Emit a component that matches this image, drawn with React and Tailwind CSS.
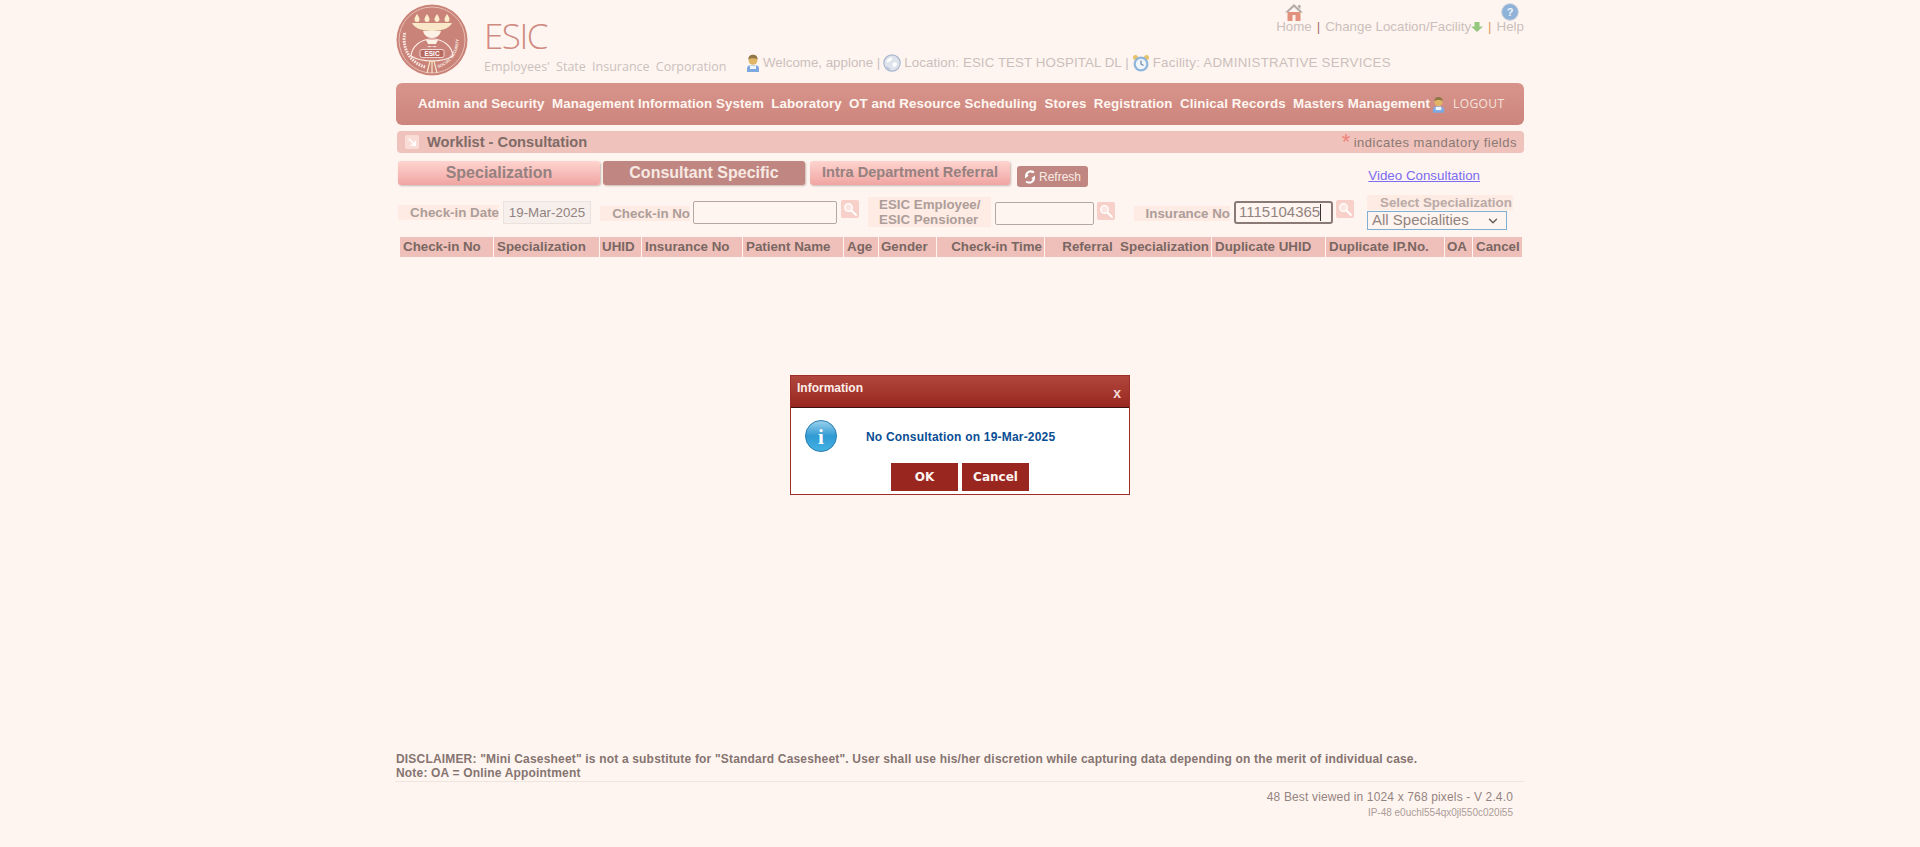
import { ChevronDown } from 'lucide-react'

const navItems = ['Admin and Security', 'Management Information System', 'Laboratory', 'OT and Resource Scheduling', 'Stores', 'Registration', 'Clinical Records', 'Masters Management']

const columns = [
    { label: 'Check-in No', cls: 'w-[93px] pl-[3px]' },
    { label: 'Specialization', cls: 'w-[105px] pl-[3px]' },
    { label: 'UHID', cls: 'w-[41px] pl-[2px]' },
    { label: 'Insurance No', cls: 'w-[100px] pl-[3px]' },
    { label: 'Patient Name', cls: 'w-[100px] pl-[3px]' },
    { label: 'Age', cls: 'w-[34px] pl-[3px]' },
    { label: 'Gender', cls: 'w-[57px] pl-[2px]' },
    { label: 'Check-in Time', cls: 'w-[107px] text-right pr-[2px]' },
    { label: 'Referral\u00a0 Specialization', cls: 'w-[166px] text-right pr-[2px]' },
    { label: 'Duplicate UHID', cls: 'w-[113px] pl-[3px]' },
    { label: 'Duplicate IP.No.', cls: 'w-[118px] pl-[3px]' },
    { label: 'OA', cls: 'w-[27px] pl-[2px]' },
    { label: 'Cancel', cls: 'w-[49px] pl-[3px]' },
]

function Person({ className }) {
    return (
        <svg viewBox="0 0 14 18" className={className}>
            <path d="M1 18v-4c0-2 2-3 6-3s6 1 6 3v4z" fill="#7ea9e0" />
            <path d="M4 11.5h6v3.5h-6z" fill="#eef4fb" />
            <ellipse cx="7" cy="6" rx="4.5" ry="4.8" fill="#e0b565" />
            <path d="M2.4 5.5C2.4 2 4.5.8 7 .8s4.6 1.2 4.6 4.7C9.5 3.8 4.5 3.8 2.4 5.5z" fill="#8f7748" />
        </svg>
    )
}

function Globe() {
    return (
        <svg viewBox="0 0 18 18" className="w-[18px] h-[18px]">
            <circle cx="9" cy="9" r="8.2" fill="#dfe3ec" stroke="#aab7cf" strokeWidth="1.2" />
            <path d="M4 6c2-2 4-3 5-2s-1 3-3 4-3 0-2-2zM10 9c2-1 4 0 4 1s-2 3-3 3-2-3-1-4z" fill="#fff" />
            <path d="M3 12c2 1 3 3 5 3-2 1-4 0-5-3z" fill="#a9b8d2" />
        </svg>
    )
}

function Clock() {
    return (
        <svg viewBox="0 0 18 18" className="w-[18px] h-[18px]">
            <circle cx="3.5" cy="3.5" r="2.5" fill="#e6c36a" />
            <circle cx="14.5" cy="3.5" r="2.5" fill="#e6c36a" />
            <circle cx="9" cy="10" r="7.5" fill="#8fb6dc" />
            <circle cx="9" cy="10" r="5.2" fill="#f1f6fb" />
            <path d="M9 6.5v3.5l2.5 1.5" fill="none" stroke="#6d87a6" strokeWidth="1.2" />
        </svg>
    )
}

function Home() {
    return (
        <svg viewBox="0 0 20 18" className="w-[20px] h-[18px]">
            <path d="M3.5 9h13v9h-13z" fill="#e2917f" />
            <path d="M8.5 12h3v6h-3z" fill="#fff1ea" />
            <path d="M10 1 1 9.5h3L10 4l6 5.500h3z" fill="#b5aca8" />
            <path d="M14 2h2.500v4L14 4z" fill="#b5aca8" />
        </svg>
    )
}

function Help() {
    return (
        <svg viewBox="0 0 18 18" className="w-[18px] h-[18px]">
            <circle cx="9" cy="9" r="8.300" fill="#8fb2d8" stroke="#c5cfdb" strokeWidth="1" />
            <text x="9" y="13" textAnchor="middle" fontSize="11" fontWeight="700" fill="#eef5fb" fontFamily="Liberation Sans, sans-serif">?</text>
        </svg>
    )
}

function DownArrow() {
    return (
        <svg viewBox="0 0 12 12" className="w-[12px] h-[12px] shrink-0 mb-[1px]">
            <path d="M3.500 1h5v4.500H12L6 11 0 5.500h3.500z" fill="#96c77e" />
        </svg>
    )
}

function SearchBtn({ className }) {
    return (
        <div className={`w-[18px] h-[18px] rounded-[2px] bg-[#f7d0c9] shrink-0 ${className}`}>
            <svg viewBox="0 0 18 18" className="w-[18px] h-[18px]">
                <circle cx="7.500" cy="7.500" r="3.800" fill="#fbe6e1" stroke="#fff" strokeWidth="1.300" />
                <path d="M10.500 10.500 15 15" stroke="#fff" strokeWidth="2" strokeLinecap="round" />
            </svg>
        </div>
    )
}

function Logo() {
    return (
        <svg viewBox="0 0 72 72" className="w-[72px] h-[72px] shrink-0">
            <circle cx="36" cy="36" r="35.500" fill="#c98379" />
            <circle cx="36" cy="36" r="33" fill="none" stroke="#f3d9cf" strokeWidth="0.700" />
            <path id="rightArc" d="M42 64A29 29 0 0 0 62 30" fill="none" />
            <text fontSize="4.200" fontWeight="700" fill="#fbeae3" fontFamily="Liberation Sans, sans-serif">
                <textPath href="#rightArc">SOCIAL SECURITY</textPath>
            </text>
            <path d="M29 63A29 29 0 0 1 9 28" fill="none" stroke="#fbeae3" strokeWidth="3" strokeDasharray="1.600 1" />
            {/* lamp: four flames over a shallow dish and bowl */}
            {[21, 31, 41, 51].map(x => (
                <path key={x} d={`M${x} 10c1.800 2.500 2.500 4 2.500 5.500a2.500 2.500 0 0 1-5 0c0-1.500.7-3 2.500-5.500z`} fill="#fbeccb" />
            ))}
            <path d="M16 19h40c-2 5-10 8-20 8s-18-3-20-8z" fill="#f8e8c8" />
            <path d="M27 27h18c-1 4-4 7-9 7s-8-3-9-7z" fill="#fdf2e6" />
            <path d="M15 52c1-10 10-17 21-17s20 7 21 17" fill="none" stroke="#fbeae3" strokeWidth="1.200" />
            <path d="M30 36h12l-2 4h-8z" fill="#fdf2e6" />
            <text x="36" y="44" textAnchor="middle" fontSize="3.600" fill="#fff" fontWeight="700" fontFamily="Liberation Sans, sans-serif">••• •••</text>
            <rect x="24" y="45.500" width="24" height="8" rx="2" fill="#b9685f" stroke="#fff" strokeWidth="0.700" />
            <text x="36" y="52" textAnchor="middle" fontSize="6.500" fill="#fff" fontWeight="700" fontFamily="Liberation Sans, sans-serif">ESIC</text>
            <path d="M15 52c5 3 13 5 21 5s16-2 21-5" fill="none" stroke="#fbeae3" strokeWidth="1.200" />
            <path d="M31 69l3-12h4l3 12M36 57v12" fill="none" stroke="#f8e8c8" strokeWidth="1.200" />
        </svg>
    )
}

function Tab({ label, active, className }) {
    return (
        <div className={`h-[24px] rounded-[3px] text-center font-bold shadow-[1px_1px_2px_rgba(120,90,85,0.4)] ${active ? 'bg-[#c08681] text-[#f8e9e3]' : 'bg-gradient-to-b from-[#fed4cf] to-[#f0a5a2] text-[#958180]'} ${className}`}>
            {label}
        </div>
    )
}

function Dialog() {
    return (
        <div className="absolute left-[790px] top-[375px] w-[340px] h-[120px] border border-[#a02e28] bg-white">
            <div className="relative h-[32px] border-b border-[#3d120e] bg-gradient-to-b from-[#b0463d] to-[#98261e]">
                <span className="absolute left-[6px] top-[5px] text-[12px] font-bold leading-[14px] text-[#fdeeea]">Information</span>
                <span className="absolute right-[8px] top-[9px] text-[14px] font-bold leading-[16px] text-[#f4d9d4]">x</span>
            </div>
            <div className="flex items-center h-[55px] pt-[2px] pl-[13px]">
                <svg viewBox="0 0 34 34" className="w-[34px] h-[34px] shrink-0 -mt-[1px]">
                    <defs>
                        <linearGradient id="infoFill" x1="0" y1="0" x2="0" y2="1">
                            <stop offset="0" stopColor="#9fd2ee" />
                            <stop offset="0.5" stopColor="#2f9ad3" />
                            <stop offset="1" stopColor="#45b2e4" />
                        </linearGradient>
                    </defs>
                    <circle cx="17" cy="17" r="15.500" fill="url(#infoFill)" stroke="#2c7fae" strokeWidth="1" />
                    <text x="17" y="25" textAnchor="middle" fontSize="21" fontWeight="700" fill="#fff" fontFamily="Liberation Serif, serif">i</text>
                </svg>
                <span className="ml-[28px] mt-[1px] text-[12px] font-bold tracking-[0.2px] text-[#0a4e94]">No Consultation on 19-Mar-2025</span>
            </div>
            <div className="flex justify-center gap-[4px] font-['DejaVu_Sans',sans-serif] text-[12px] font-bold text-[#fdf3ef]">
                <button className="w-[67px] h-[28px] bg-[#9a2620]">OK</button>
                <button className="w-[67px] h-[28px] bg-[#9a2620]">Cancel</button>
            </div>
        </div>
    )
}

export default function App() {
    return (
        <div className="relative h-[847px] bg-[#fff5f0] font-['Liberation_Sans',Arial,sans-serif] overflow-hidden">
            <div className="w-[1130px] h-full mx-auto flex flex-col">
                {/* header */}
                <div className="flex h-[83px] pt-[4px] pl-[1px]">
                    <Logo />
                    <div className="ml-[16px] pt-[12px] w-[261px] shrink-0">
                        <div className="font-['Open_Sans',sans-serif] font-light text-[35px] leading-[40px] tracking-[-1.5px] text-[#cf8a82]">ESIC</div>
                        <div className="mt-[2px] font-['Open_Sans',sans-serif] text-[12.5px] leading-[18px] text-[#c9c1be] whitespace-nowrap [word-spacing:3px]">Employees' State Insurance Corporation</div>
                    </div>
                    <div className="flex-1 flex flex-col text-[13.33px] text-[#cbbfbc]">
                        <div className="flex justify-end items-end h-[33px] -mt-[3px] pr-[1px] whitespace-nowrap">
                            <div className="flex flex-col items-center -mb-[1px]">
                                <div className="-mb-[2px]"><Home /></div>
                                <span className="leading-[16px]">Home</span>
                            </div>
                            <span className="mx-[5px] leading-[15px] text-[#a8716a]">|</span>
                            <span className="leading-[15px]">Change Location/Facility</span>
                            <DownArrow />
                            <span className="mx-[5px] leading-[15px] text-[#d9a05e]">|</span>
                            <div className="flex flex-col items-center -mb-[1px]">
                                <div className="-mb-[2px]"><Help /></div>
                                <span className="leading-[16px]">Help</span>
                            </div>
                        </div>
                        <div className="flex items-center gap-[3px] mt-[19px] pl-[1px] whitespace-nowrap">
                            <Person className="w-[14px] h-[18px]" />
                            <span>Welcome, applone |</span>
                            <Globe />
                            <span className="tracking-[0.08px]">Location: ESIC TEST HOSPITAL DL |</span>
                            <Clock />
                            <span className="tracking-[0.25px]">Facility: ADMINISTRATIVE SERVICES</span>
                        </div>
                    </div>
                </div>

                {/* nav */}
                <div className="flex items-center h-[42px] mx-[1px] pl-[22px] rounded-[6px] bg-gradient-to-b from-[#d8948b] to-[#cc857d] text-[13.33px] font-bold tracking-[0.08px] text-[#fff6f0] whitespace-nowrap">
                    <div className="flex gap-[7.4px]">
                        {navItems.map(item => <span key={item}>{item}</span>)}
                    </div>
                    <Person className="w-[13px] h-[17px] ml-[2px]" />
                    <span className="ml-[8px] font-['Open_Sans',sans-serif] font-normal text-[12px] tracking-[0.4px] text-[#f6e4dd]">LOGOUT</span>
                </div>

                {/* title bar */}
                <div className="flex items-center justify-between h-[22px] mt-[6px] ml-[2px] mr-[1px] pl-[8px] pr-[7px] rounded-[4px] bg-[#efc2bb]">
                    <div className="flex items-center gap-[8px]">
                        <div className="w-[14px] h-[14px] rounded-[2px] bg-[#f9dcd6] flex items-center justify-center">
                            <svg viewBox="0 0 10 10" className="w-[9px] h-[9px]">
                                <path d="M1 1l6 6M8 3v5H3" fill="none" stroke="#fff" strokeWidth="1.800" />
                            </svg>
                        </div>
                        <span className="text-[14.67px] font-bold text-[#7f6b67]">Worklist - Consultation</span>
                    </div>
                    <div className="flex items-start text-[#8b7975] text-[13px] tracking-[0.5px]">
                        <span className="text-[#f2837a] text-[22px] leading-[20px] mr-[3px] h-[18px]">*</span>
                        <span className="leading-[21px]">indicates mandatory fields</span>
                    </div>
                </div>

                {/* tabs */}
                <div className="relative flex h-[34px] mt-[8px] pl-[3px]">
                    <Tab label="Specialization" className="w-[202px] text-[16px] leading-[24px]" />
                    <Tab label="Consultant Specific" active className="w-[202px] ml-[3px] text-[16px] leading-[24px]" />
                    <Tab label="Intra Department Referral" className="w-[200px] ml-[5px] text-[14.6px] leading-[22px]" />
                    <div className="flex items-center justify-center gap-[3px] w-[71px] h-[21px] ml-[7px] mt-[5px] rounded-[3px] bg-[#c08681] text-[12px] text-[#f9ebe5]">
                        <svg viewBox="0 0 12 16" className="w-[12px] h-[16px]">
                            <path d="M10 3.500C6 1 2 3 2 7.500l2-1.500M2 12.500c4 2.500 8 .5 8-4l-2 1.500" fill="none" stroke="#fff" strokeWidth="2" />
                        </svg>
                        Refresh
                    </div>
                    <a className="ml-auto mr-[45px] mt-[6px] text-[13.33px] leading-[17px] text-[#7b6cf0] underline">Video Consultation</a>
                </div>

                {/* filters */}
                <div className="flex items-start h-[41px] pl-[3px] text-[#ad9d99] text-[13.33px] font-bold">
                    <label className="w-[101px] h-[15px] mt-[10px] text-right leading-[16px] bg-[#fdebe4] whitespace-nowrap">Check-in Date</label>
                    <div className="w-[88px] h-[23px] ml-[4px] mt-[6px] bg-[#f6efeb] border border-[#ece2dd] text-[13.33px] font-normal text-[#928380] leading-[21px] text-center">19-Mar-2025</div>
                    <label className="w-[90px] h-[15px] ml-[9px] mt-[11px] text-right leading-[16px] bg-[#fdebe4] whitespace-nowrap">Check-in No</label>
                    <div className="w-[144px] h-[23px] ml-[3px] mt-[6px] border border-[#b7a7a3] rounded-[2px]" />
                    <SearchBtn className="ml-[4px] mt-[5px]" />
                    <label className="w-[123px] h-[30px] ml-[9px] mt-[2px] pl-[11px] leading-[15px] bg-[#fdebe4]">ESIC Employee/<br />ESIC Pensioner</label>
                    <div className="w-[99px] h-[23px] ml-[4px] mt-[7px] border border-[#b7a7a3] rounded-[2px]" />
                    <SearchBtn className="ml-[3px] mt-[7px]" />
                    <label className="w-[96px] h-[15px] ml-[19px] mt-[11px] text-right leading-[16px] bg-[#fdebe4] whitespace-nowrap">Insurance No</label>
                    <div className="flex items-center w-[99px] h-[23px] ml-[4px] mt-[6px] pl-[3px] border-2 border-[#8a7a76] rounded-[3px] text-[15px] font-normal text-[#928380]">
                        1115104365<span className="w-px h-[17px] bg-[#3b3330]" />
                    </div>
                    <SearchBtn className="ml-[3px] mt-[5px]" />
                    <div className="w-[146px] ml-[13px]">
                        <div className="h-[15px] pl-[13px] bg-[#fdebe4] text-[#b9aaa6] leading-[16px] whitespace-nowrap">Select Specialization</div>
                        <div className="flex items-center justify-between w-[140px] h-[19px] mt-[1px] pl-[4px] pr-[6px] border border-[#7fb0d4] text-[15px] font-normal text-[#928380]">
                            All Specialities
                            <ChevronDown size={14} strokeWidth={2.500} className="text-[#6c5e5a]" />
                        </div>
                    </div>
                </div>

                {/* worklist table header */}
                <div className="flex gap-x-px h-[20px] mt-[1px] ml-[5px] text-[13.33px] font-bold text-[#7a6763] whitespace-nowrap">
                    {columns.map(c => (
                        <div key={c.label} className={`bg-[#efc0b9] leading-[20px] ${c.cls}`}>{c.label}</div>
                    ))}
                </div>

                {/* footer */}
                <div className="mt-auto mb-[29px]">
                    <div className="text-[12px] font-bold leading-[14px] tracking-[0.18px] text-[#857470] pl-px">
                        <div>DISCLAIMER: "Mini Casesheet" is not a substitute for "Standard Casesheet". User shall use his/her discretion while capturing data depending on the merit of individual case.</div>
                        <div>Note: OA = Online Appointment</div>
                    </div>
                    <div className="h-px mt-[1px] mr-[1px] bg-[#efe4de]" />
                    <div className="pr-[12px] text-right">
                        <div className="mt-[8px] text-[12px] leading-[14px] tracking-[0.15px] text-[#948480]">48 Best viewed in 1024 x 768 pixels - V 2.4.0</div>
                        <div className="mt-[3px] text-[10px] leading-[11px] text-[#aa9c98]">IP-48 e0uchl554qx0jl550c020i55</div>
                    </div>
                </div>
            </div>
            <Dialog />
        </div>
    )
}
